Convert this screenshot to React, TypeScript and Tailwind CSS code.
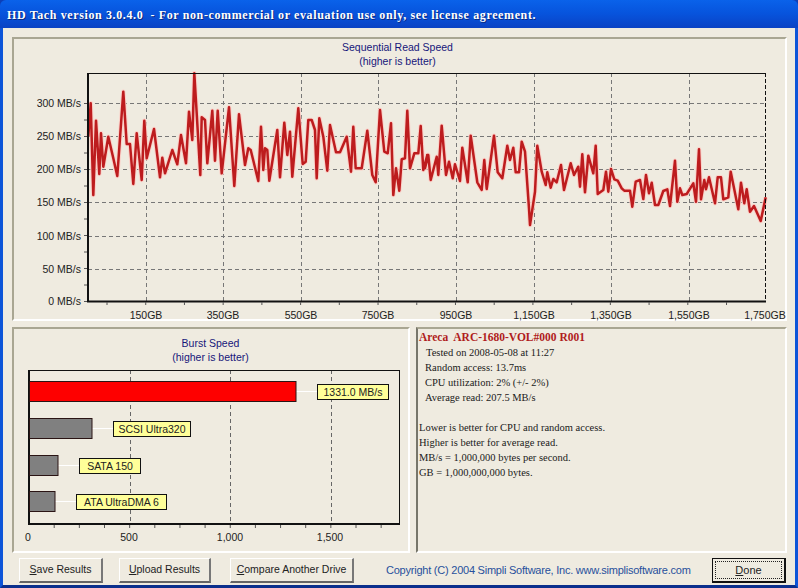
const seg: any[] = [
  [85,70,[[10,200],[17,100],[25,375],[33,152],[43,312],[48,190],[55,290],[70,200],[85,265],[97,318],[115,65],[125,222],[135,222],[145,342],[155,190],[170,330],[178,152],[185,265],[207,177],[225,322],[232,263],[240,310],[262,240],[277,283],[288,195],[303,280],[312,125],[322,210],[328,10],[335,130],[346,315],[350,142],[360,150],[367,280],[382,122],[390,272],[398,122],[410,310],[432,112],[448,348],[462,133],[480,285],[490,235],[497,240],[520,333]]],
  [255,90,[[18,110],[25,240],[30,175],[37,180],[43,272],[67,120],[75,262],[88,98],[97,195],[105,125],[112,260],[130,55],[143,222],[152,215],[160,90],[170,90],[180,120],[185,265],[193,85],[205,140],[217,242],[225,105],[243,187],[255,187],[275,140],[288,245],[295,110],[302,235],[320,235],[337,122],[352,255],[362,277],[375,60],[388,185],[398,190],[408,100],[415,315],[423,235],[433,302],[440,208],[450,205],[457,62],[465,235],[478,190],[490,190],[497,108],[505,240],[517,195]]],
  [425,95,[[0,220],[10,180],[17,255],[35,185],[40,240],[50,92],[63,240],[72,200],[83,250],[90,208],[105,258],[112,158],[128,262],[137,122],[157,262],[170,285],[178,195],[185,282],[207,122],[218,232],[232,250],[247,152],[255,195],[265,158],[272,232],[282,232],[290,140],[300,170],[312,340],[315,390],[330,290],[337,152],[350,230],[362,270],[367,232],[377,278],[385,252],[395,262],[408,210],[417,285],[437,205],[447,240],[460,215],[465,275],[472,178],[480,292],[490,182],[505,235],[512,152]]],
  [595,120,[[8,222],[25,210],[33,155],[40,215],[48,147],[58,178],[68,182],[80,205],[88,212],[105,212],[112,260],[122,185],[135,180],[145,237],[153,165],[162,220],[170,188],[180,255],[190,255],[205,213],[217,208],[225,258],[240,122],[247,245],[255,205],[262,225],[275,222],[295,190],[303,245],[312,88],[318,238],[328,180],[333,208],[342,172],[360,250],[368,172],[378,172],[385,238],[400,232],[407,155],[430,268],[438,188],[448,250],[455,208],[465,275],[477,258],[497,303],[512,232]]],
];

const linePoints = seg
  .flatMap(([ox, oy, pts]: any) =>
    pts.map(([x, y]: number[]) => `${(ox + x / 3).toFixed(1)},${(oy + y / 3).toFixed(1)}`),
  )
  .join(" ");

const yLabels: [string, number][] = [
  ["300 MB/s", 103],
  ["250 MB/s", 136],
  ["200 MB/s", 169],
  ["150 MB/s", 202],
  ["100 MB/s", 236],
  ["50 MB/s", 269],
  ["0 MB/s", 301],
];
const xLabels: [string, number][] = [
  ["150GB", 146],
  ["350GB", 223],
  ["550GB", 301],
  ["750GB", 378],
  ["950GB", 456],
  ["1,150GB", 534],
  ["1,350GB", 611],
  ["1,550GB", 689],
  ["1,750GB", 765],
];
const range = (from: number, to: number, step: number) => {
  const out: number[] = [];
  for (let v = from; v <= to + 0.01; v += step) out.push(v);
  return out;
};

function SpeedChart() {
  return (
    <svg viewBox="14 39 773 283" width={773} height={283} className="block text-[10.5px]">
      <text x={397.5} y={51} textAnchor="middle" className="fill-[#16167a]">Sequential Read Speed</text>
      <text x={397.5} y={65} textAnchor="middle" className="fill-[#16167a]">(higher is better)</text>
      {yLabels.slice(0, 6).map(([, y]) => (
        <line key={y} x1={88} x2={765} y1={y + 0.5} y2={y + 0.5} stroke="#777" strokeDasharray="4 3" />
      ))}
      {xLabels.slice(0, 8).map(([, x]) => (
        <line key={x} x1={x + 0.5} x2={x + 0.5} y1={73} y2={301} stroke="#777" strokeDasharray="4 3" />
      ))}
      <polyline points={linePoints} fill="none" stroke="#fbd0c8" strokeWidth={4.5} strokeLinejoin="round" />
      <polyline points={linePoints} fill="none" stroke="#bd1c1e" strokeWidth={2.5} strokeLinejoin="round" />
      <line x1={88} x2={765} y1={73.5} y2={73.5} stroke="#111" />
      <line x1={765.5} x2={765.5} y1={73} y2={301} stroke="#111" strokeDasharray="4 2" />
      <line x1={88} x2={88} y1={73} y2={302} stroke="#111" strokeWidth={2} />
      <line x1={87} x2={766} y1={301.5} y2={301.5} stroke="#111" strokeWidth={2} />
      {range(107, 765, 38.72).map((x) => (
        <line key={x} x1={x} x2={x} y1={302} y2={305} stroke="#555" />
      ))}
      {range(103, 301, 16.5).map((y) => (
        <line key={y} x1={84} x2={87} y1={y + 0.5} y2={y + 0.5} stroke="#555" />
      ))}
      {yLabels.map(([t, y]) => (
        <text key={t} x={81} y={y + 4} textAnchor="end" className="fill-[#222]">{t}</text>
      ))}
      {xLabels.map(([t, x]) => (
        <text key={t} x={x} y={319} textAnchor="middle" className="fill-[#222]">{t}</text>
      ))}
    </svg>
  );
}

const bars = [
  { top: 381, end: 296, fill: "#fe0000", label: "1331.0 MB/s", lx: 317, lw: 71 },
  { top: 418, end: 92, fill: "#808080", label: "SCSI Ultra320", lx: 113, lw: 77 },
  { top: 455, end: 58, fill: "#808080", label: "SATA 150", lx: 79, lw: 61 },
  { top: 491, end: 55, fill: "#808080", label: "ATA UltraDMA 6", lx: 76, lw: 90 },
];

function BurstChart() {
  return (
    <svg viewBox="14 329 394 222" width={394} height={222} className="block text-[10.5px]">
      <text x={210.5} y={347} textAnchor="middle" className="fill-[#16167a]">Burst Speed</text>
      <text x={210.5} y={361} textAnchor="middle" className="fill-[#16167a]">(higher is better)</text>
      {[130, 230, 331].map((x) => (
        <line key={x} x1={x + 0.5} x2={x + 0.5} y1={370} y2={524} stroke="#666" strokeDasharray="4 3" />
      ))}
      <line x1={29} x2={399} y1={370.5} y2={370.5} stroke="#111" />
      <line x1={399.5} x2={399.5} y1={370} y2={524} stroke="#111" />
      <line x1={29} x2={29} y1={370} y2={525} stroke="#111" strokeWidth={2} />
      <line x1={28} x2={400} y1={524} y2={524} stroke="#111" strokeWidth={2} />
      {bars.map((b) => (
        <g key={b.label}>
          <line x1={b.end} x2={b.lx} y1={b.top + 10.5} y2={b.top + 10.5} stroke="#fff" />
          <rect x={29.5} y={b.top + 0.5} width={b.end - 29.5} height={20} fill={b.fill} stroke="#2a1414" />
          <rect x={b.lx + 0.5} y={b.top + 3.5} width={b.lw} height={15} fill="#ffff99" stroke="#111" />
          <text x={b.lx + b.lw / 2 + 0.5} y={b.top + 15} textAnchor="middle" className="fill-[#222]">{b.label}</text>
        </g>
      ))}
      {range(54.2, 399, 25.15).map((x) => (
        <line key={x} x1={x} x2={x} y1={525} y2={528} stroke="#555" />
      ))}
      {([["0", 28], ["500", 129], ["1,000", 230], ["1,500", 330]] as [string, number][]).map(([t, x]) => (
        <text key={t} x={x} y={541} textAnchor="middle" className="fill-[#222]">{t}</text>
      ))}
    </svg>
  );
}

function XpButton({ first, rest, className }: { first: string; rest: string; className: string }) {
  return (
    <button className={`h-[25px] flex items-center justify-center whitespace-nowrap bg-[#efebe0] border border-t-white border-l-white border-r-2 border-b-2 border-r-[#777] border-b-[#666] text-[10.5px] text-[#222] ${className}`}>
      <span className="underline">{first}</span>
      {rest}
    </button>
  );
}

export default function App() {
  return (
    <div className="w-[798px] h-[588px] overflow-hidden flex flex-col bg-[#0c3fb8] font-['Liberation_Sans',sans-serif]">
      <div className="h-[28px] shrink-0 rounded-t-[6px] pl-[7px] pt-[2px] flex items-center bg-linear-to-b from-[#0a62ea] via-[#0753dc] to-[#0a42c4] text-white font-['Liberation_Serif',serif] font-bold text-[12px] tracking-[0.62px] whitespace-pre [text-shadow:1px_1px_0_#0a2a80]">
        HD Tach version 3.0.4.0  - For non-commercial or evaluation use only, see license agreement.
      </div>
      <div className="flex-1 flex flex-col border-l-[3px] border-r-[3px] border-b-[3px] border-l-[#0d55d8] border-r-[#0d55d8] border-b-[#0b2f8c] bg-[#efebe0] pt-[9px] pl-[9px] pr-[8px]">
        <div className="w-[775px] h-[284px] border-2 border-t-[#a9a692] border-l-[#a9a692] border-r-white border-b-white">
          <SpeedChart />
        </div>
        <div className="flex gap-[6px] mt-[6px]">
          <div className="w-[398px] h-[226px] border-2 border-t-[#a9a692] border-l-[#a9a692] border-r-white border-b-white">
            <BurstChart />
          </div>
          <div className="w-[371px] h-[226px] border-2 border-t-[#a9a692] border-l-[#77766a] border-r-white border-b-white pl-[1px] pt-[1px] font-['Liberation_Serif',serif] text-[10.5px] leading-[15px] text-[#1a1a1a]">
            <div className="font-bold text-[#b01c1c] text-[11.5px] whitespace-pre">Areca  ARC-1680-VOL#000 R001</div>
            <div className="pl-[7px]">Tested on 2008-05-08 at 11:27</div>
            <div className="pl-[6px]">Random access: 13.7ms</div>
            <div className="pl-[6px]">CPU utilization: 2% (+/- 2%)</div>
            <div className="pl-[6px]">Average read: 207.5 MB/s</div>
            <div className="h-[15px]" />
            <div>Lower is better for CPU and random access.</div>
            <div>Higher is better for average read.</div>
            <div>MB/s = 1,000,000 bytes per second.</div>
            <div>GB = 1,000,000,000 bytes.</div>
          </div>
        </div>
        <div className="flex items-center mt-[5px] pl-[7px]">
          <XpButton first="S" rest="ave Results" className="w-[84px]" />
          <XpButton first="U" rest="pload Results" className="w-[92px] ml-[16px]" />
          <XpButton first="C" rest="ompare Another Drive" className="w-[124px] ml-[19px]" />
          <span className="ml-[32px] text-[11px] tracking-[-0.23px] text-[#27509c] whitespace-nowrap w-[304px]">
            Copyright (C) 2004 Simpli Software, Inc. www.simplisoftware.com
          </span>
          <div className="ml-[22px] w-[74px] h-[25px] border border-[#111] border-b-2 border-r-2 flex items-center justify-center p-[2px]">
            <div className="w-full h-full border border-dotted border-[#222] flex items-center justify-center text-[11px] text-[#222]">
              <span className="underline">D</span>one
            </div>
          </div>
        </div>
      </div>
    </div>
  );
}
